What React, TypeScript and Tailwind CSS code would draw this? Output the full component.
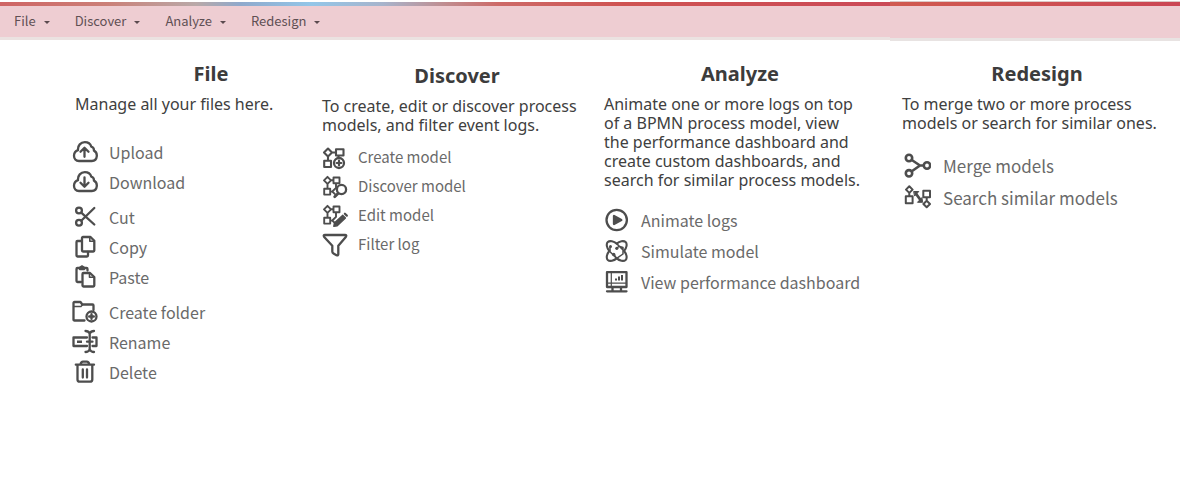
import type { ReactNode } from "react";

type Item = { label: string; icon: ReactNode; newGroup?: boolean };

function Icon({ children, size = 26 }: { children: ReactNode; size?: 26 | 28 }) {
  return (
    <svg
      className={size === 28 ? "size-7 shrink-0" : "size-[26px] shrink-0"}
      viewBox={size === 28 ? "0 0 28 28" : "0 0 26 26"}
      fill="none"
      stroke="#4d4d4d"
      strokeWidth="2.3"
      strokeLinecap="round"
      strokeLinejoin="round"
      aria-hidden="true"
    >
      {children}
    </svg>
  );
}

const cloud =
  "M7 22C3.800 22 2 19.700 2 16.800C2 14 3.800 12 6 11.200C5.600 6.300 8.800 3.200 12.800 3.200C16 3.200 18.500 5 19.300 7.600C21.300 8.200 22.100 9.700 21.900 11.600C24.200 12.600 25 14.700 24.800 17.200C24.500 20.200 22.500 22 19.800 22Z";

const upload = (
  <Icon>
    <path d={cloud} />
    <path d="M12.500 17.800V9M8.500 12.800l4-4 4 4" />
  </Icon>
);
const download = (
  <Icon>
    <path d={cloud} />
    <path d="M12.500 8.500v9M8.500 13.700l4 4 4-4" />
  </Icon>
);
const cut = (
  <Icon>
    <circle cx="7" cy="6.500" r="2.900" />
    <circle cx="7" cy="18.800" r="2.900" />
    <path d="M9.500 8.800L22.300 20.500M9.500 16.500L22.300 4" />
  </Icon>
);
const copy = (
  <Icon>
    <path d="M9.500 7H5.500Q4.500 7 4.500 8V21.500Q4.500 22.500 5.500 22.500H15Q16 22.500 16 21.500V18" />
    <path d="M11 3H18.500L22.300 6.800V16.500Q22.300 17.500 21.300 17.500H11Q10 17.500 10 16.500V4Q10 3 11 3Z" />
    <path d="M17.800 3.300V7.300H22" strokeWidth="1.600" />
  </Icon>
);
const paste = (
  <Icon>
    <path d="M9 18H5.500Q4.500 18 4.500 17V5Q4.500 4 5.500 4H14.500Q15.500 4 15.500 5V6.500" />
    <path d="M7.800 3.500V5.500H12.200V3.500L10 2Z" strokeWidth="1.600" />
    <path d="M11.500 9H18L22.300 13V21.500Q22.300 22.500 21.300 22.500H11.500Q10.500 22.500 10.500 21.500V10Q10.500 9 11.500 9Z" />
    <path d="M17.500 9.300V13.300H22" strokeWidth="1.600" />
  </Icon>
);
const createFolder = (
  <Icon>
    <path d="M12.500 21.500H2.500Q1.500 21.500 1.500 20.500V4Q1.500 3 2.500 3H8.500L10.300 5.500H20.500Q21.500 5.500 21.500 6.500V11" />
    <path d="M2 7.500H9L10.500 5.800" strokeWidth="1.400" />
    <circle cx="19.500" cy="17.500" r="5" />
    <path d="M19.500 15.200v4.600M17.200 17.500h4.600" strokeWidth="2.400" />
  </Icon>
);
const rename = (
  <Icon>
    <path d="M15 8.500H1.500V17H15M20.500 8.500H24.500V17H20.500" />
    <path d="M5 11.500h5v2.500H5z" fill="#4d4d4d" stroke="none" />
    <path d="M17.700 4.500V20.500M13.500 2Q16.500 2 17.700 4.500Q19 2 22 2M13.500 23Q16.500 23 17.700 20.500Q19 23 22 23M15 12.700h5.500" />
  </Icon>
);
const trash = (
  <Icon>
    <path d="M3.800 5.700H22M8.500 5.500Q9 2.700 11 2.700H14.800Q16.800 2.700 17.300 5.500M5.500 6V20.500Q5.500 22.700 7.700 22.700H18Q20.300 22.700 20.300 20.500V6" />
    <path d="M10.800 10.500v8M15 10.500v8" />
  </Icon>
);
const createModel = (
  <Icon>
    <path
      d="M6 3.500L10 7.500L6 11.500L2 7.500ZM10 7.500H13.500M14 4.300H21.500V10.500H14ZM6 11.500V15.500M2.200 15.700H9V22H2.200ZM16.500 10.500V13"
      strokeWidth="2.100"
    />
    <circle cx="17" cy="18" r="5" />
    <path d="M17 15.700v4.600M14.700 18h4.600" strokeWidth="2.200" />
  </Icon>
);
const smallModel = (
  <path
    d="M5.500 2.800L9 6.300L5.500 9.800L2 6.300ZM9 6.300H11M11.500 3.500H17.500V9.300H11.500ZM5.500 9.800V14.500M2.200 14.800H8.200V20.600H2.200ZM8.200 17.600H10M14 9.500V13.500M14 13.800L10.300 17.500L13 20.200"
    strokeWidth="1.900"
  />
);
const discoverModel = (
  <Icon>
    {smallModel}
    <circle cx="19.500" cy="15.500" r="4.600" fill="white" />
    <path d="M16 19.500L12.700 22.800" strokeWidth="2.800" />
  </Icon>
);
const editModel = (
  <Icon>
    {smallModel}
    <path d="M20.700 12.200L23.500 15L15.300 22.800L11.700 23.500L12.300 20Z" fill="#4d4d4d" strokeWidth="1.200" />
    <path d="M22.900 10.700L24.800 12.600" strokeWidth="2.200" />
  </Icon>
);
const filter = (
  <Icon>
    <path d="M3 3H23Q25 3 23.800 5L16.300 13.800V22Q16.300 24 14.500 23.200L11.500 21.500Q10.300 20.800 10.300 19.500V13.800L2.200 5Q1 3 3 3Z" />
  </Icon>
);
const animate = (
  <Icon>
    <circle cx="12.700" cy="13" r="10.200" />
    <path d="M10 9V17L17.300 13Z" fill="#4d4d4d" />
  </Icon>
);
const simulate = (
  <Icon>
    <path
      d="M12.700 5.600C15.500 3.200 19.700 2.300 21.600 4.100C23.500 6 22.600 10 20.100 13C22.600 16 23.500 20 21.600 21.900C19.700 23.700 15.500 22.800 12.700 20.400C9.900 22.800 5.700 23.700 3.800 21.900C1.900 20 2.800 16 5.300 13C2.800 10 1.900 6 3.800 4.100C5.700 2.300 9.900 3.200 12.700 5.600Z"
      strokeWidth="2.100"
    />
    <path
      d="M12.700 5.600L19.500 12.500M5.300 13L12.700 20.400M12.700 20.400L19 16V9.500L15 8.300L12.500 10.500M6 9.500V13M12.700 20.400L10 16.500"
      strokeWidth="1.500"
    />
    <g fill="#4d4d4d" stroke="none">
      <circle cx="6.500" cy="8.500" r="1.500" />
      <circle cx="9.700" cy="16.500" r="1.700" />
      <circle cx="12.800" cy="10.300" r="1.600" />
    </g>
  </Icon>
);
const dashboard = (
  <Icon>
    <path d="M3 3.200H22.500V18H3ZM8.500 18V21.500M17 18V21.500M3 22.300H22.500" />
    <path d="M7.300 3V17.500M3 14.200H22.500" strokeWidth="1.200" />
    <path d="M12 11.500V9.500M15 11.500V7.500M18 11.500V6" strokeWidth="2" strokeLinecap="butt" />
  </Icon>
);
const merge = (
  <Icon size={28}>
    <g strokeWidth="2.600">
      <circle cx="6" cy="6" r="3.200" />
      <circle cx="6" cy="21.300" r="3.200" />
      <circle cx="24" cy="13.500" r="3.200" />
      <path d="M8.800 8L17 13.500L8.800 19.300M17 13.500H20.500" />
    </g>
  </Icon>
);
const searchSimilar = (
  <Icon size={28}>
    <path
      d="M6.300 2.300L9.600 5.600L6.300 8.900L3 5.600ZM6.300 8.900V12M2.800 12.200H9.600V19.200H2.800ZM20.300 6.700H27V13.300H20.300ZM23.700 13.300V16.500M23.700 16.700L27 20L23.700 23.300L20.400 20Z"
      strokeWidth="2"
    />
    <path d="M13 9.800L17.500 16" strokeWidth="2.800" />
    <path d="M11 7.500H15.800L11.800 11.800ZM19.300 18.300H14.500L18.700 13.800Z" fill="#4d4d4d" strokeWidth="1" />
  </Icon>
);

const menus = ["File", "Discover", "Analyze", "Redesign"];

const fileItems: Item[] = [
  { label: "Upload", icon: upload },
  { label: "Download", icon: download },
  { label: "Cut", icon: cut, newGroup: true },
  { label: "Copy", icon: copy },
  { label: "Paste", icon: paste },
  { label: "Create folder", icon: createFolder, newGroup: true },
  { label: "Rename", icon: rename },
  { label: "Delete", icon: trash },
];
const discoverItems: Item[] = [
  { label: "Create model", icon: createModel },
  { label: "Discover model", icon: discoverModel },
  { label: "Edit model", icon: editModel },
  { label: "Filter log", icon: filter },
];
const analyzeItems: Item[] = [
  { label: "Animate logs", icon: animate },
  { label: "Simulate model", icon: simulate },
  { label: "View performance dashboard", icon: dashboard },
];
const redesignItems: Item[] = [
  { label: "Merge models", icon: merge },
  { label: "Search similar models", icon: searchSimilar },
];

function ItemList({ items, className, rowClass }: { items: Item[]; className: string; rowClass: string }) {
  return (
    <ul className={`font-['Noto_Sans_CJK_SC',sans-serif] text-[#6a6a6a] ${className}`}>
      {items.map((item) => (
        <li
          key={item.label}
          className={`flex items-center whitespace-nowrap ${rowClass} ${item.newGroup ? "mt-[5px]" : ""}`}
        >
          {item.icon}
          <span>{item.label}</span>
        </li>
      ))}
    </ul>
  );
}

function Section({
  title,
  text,
  className,
  titleClass = "",
  textClass = "",
  children,
}: {
  title: string;
  text: string;
  className: string;
  titleClass?: string;
  textClass?: string;
  children: ReactNode;
}) {
  return (
    <section className={className}>
      <h2 className={`text-center text-xl leading-7 font-bold text-[#3c3c3c] ${titleClass}`}>{title}</h2>
      <p className={`mt-[7px] text-base leading-[19px] text-[#404040] ${textClass}`}>{text}</p>
      {children}
    </section>
  );
}

export default function App() {
  return (
    <div className="min-h-screen bg-white font-['Noto_Sans','Open_Sans',sans-serif]">
      <header className="flex items-start pr-0.5">
        <div className="flex-1 pt-0.5">
          <div className="h-1 bg-[linear-gradient(90deg,#cf6464_0%,#cb8078_12%,#b9a9a8_22%,#8fa9cc_27%,#93c6e8_35%,#a7b4cc_43%,#c08d90_50%,#cd6a68_56%,#cf5352_70%,#cb4a58_100%)]" />
          <nav className="flex h-[31px] items-center gap-[25px] bg-[#eecdd2] pb-0.5 pl-3.5">
            {menus.map((menu) => (
              <button
                key={menu}
                type="button"
                className="flex items-center gap-2 font-['Noto_Sans_CJK_SC',sans-serif] text-[13px] leading-5 text-[#5f5054]"
              >
                {menu}
                <svg className="mt-1 h-[3px] w-1.5" viewBox="0 0 6 3" fill="#5a4a4e" aria-hidden="true">
                  <path d="M0 0h6L3 3z" />
                </svg>
              </button>
            ))}
          </nav>
          <div className="h-[3px] bg-[#ebe2e1]" />
        </div>
        <div className="w-[290px] pt-px">
          <div className="h-px bg-[#dcc9c6]" />
          <div className="h-1 bg-[linear-gradient(90deg,#d05a50,#cb4654)]" />
          <div className="h-8 bg-[#eecdd2]" />
          <div className="h-[3px] bg-[#e8e3e2]" />
        </div>
      </header>

      <main className="grid grid-cols-[250fr_282fr_298fr_280fr] items-start pt-[19px] pl-[72px]">
        <Section title="File" text="Manage all your files here." className="pr-5" titleClass="pl-12" textClass="pl-[3px]">
          <ItemList items={fileItems} className="mt-[23px] text-base" rowClass="h-[30px] gap-[11px]" />
        </Section>
        <Section
          title="Discover"
          text="To create, edit or discover process models, and filter event logs."
          className="pt-0.5 pr-3"
        >
          <ItemList items={discoverItems} className="mt-2 text-[15px]" rowClass="h-[29px] gap-[10px]" />
        </Section>
        <Section
          title="Analyze"
          text="Animate one or more logs on top of a BPMN process model, view the performance dashboard and create custom dashboards, and search for similar process models."
          className="pr-[26px]"
          textClass="pr-3"
        >
          <ItemList items={analyzeItems} className="mt-3.5 text-base" rowClass="h-[31px] gap-[11px]" />
        </Section>
        <Section
          title="Redesign"
          text="To merge two or more process models or search for similar ones."
          className="pr-[10px]"
        >
          <ItemList items={redesignItems} className="mt-[17px] pl-px text-[17px]" rowClass="h-8 gap-3" />
        </Section>
      </main>
    </div>
  );
}
